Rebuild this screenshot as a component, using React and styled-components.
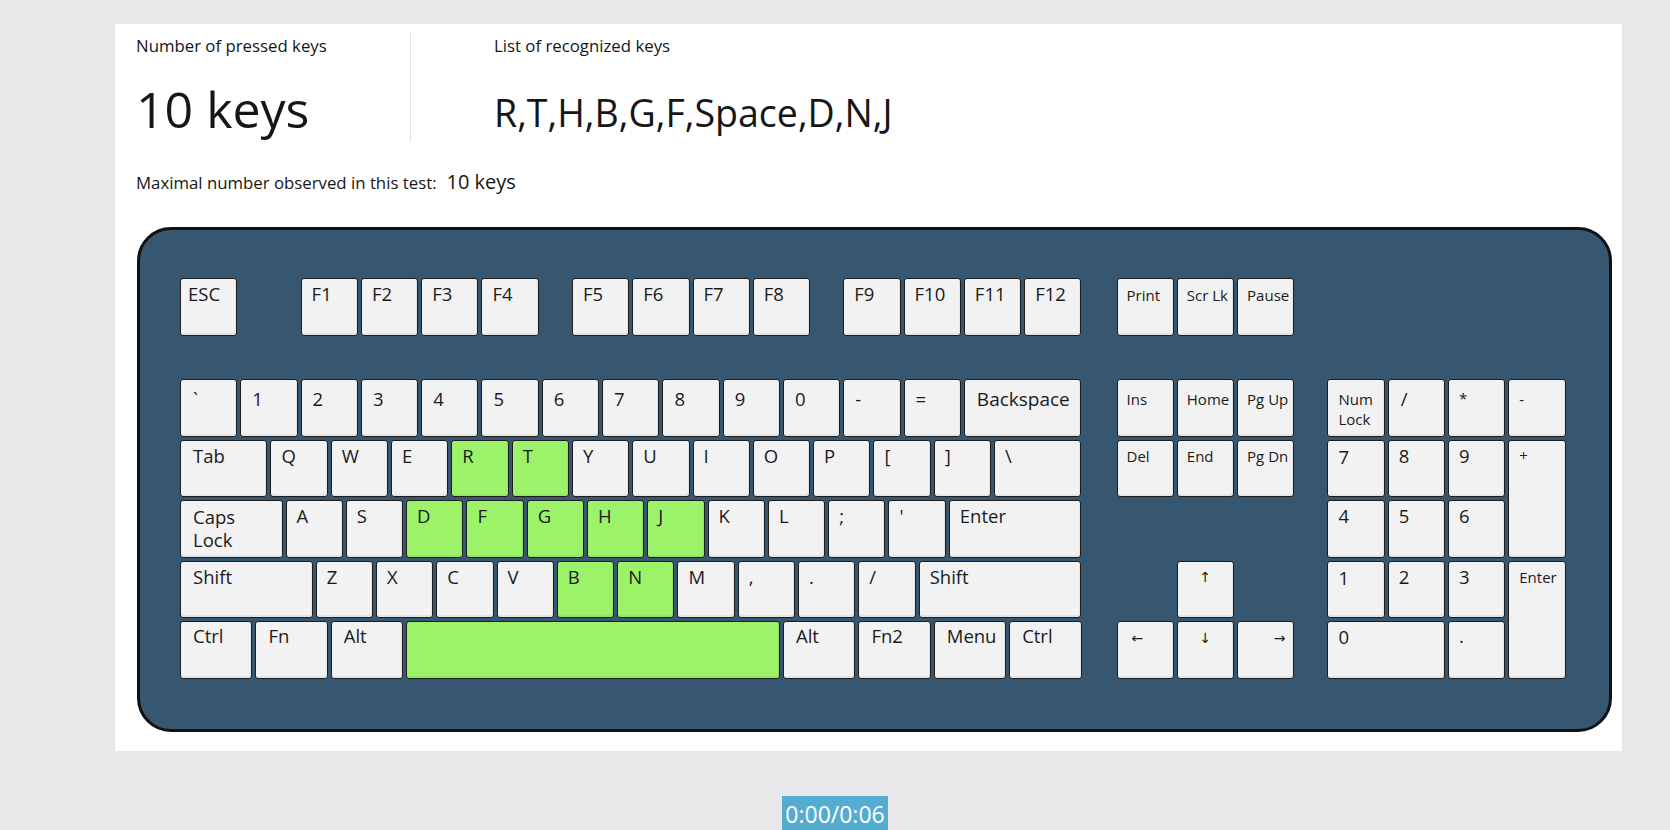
import React from "react";
import styled, { createGlobalStyle } from "styled-components";

const U = 60.3;
const GAP = 3;
const KH = 57.5;
const uw = (n) => n * U - GAP;

const GlobalStyle = createGlobalStyle`
  html, body { margin: 0; padding: 0; background: #e8e7e9; }
  body { font-family: "Open Sans", "Noto Sans", sans-serif; color: #161616; }
`;

const Page = styled.div`
  width: 1670px;
  height: 830px;
  overflow: hidden;
  padding-top: 24px;
  box-sizing: border-box;
  display: flex;
  flex-direction: column;
`;

const CardRow = styled.div`
  padding-left: 115px;
  display: flex;
`;

const Card = styled.section`
  width: 1507px;
  height: 727px;
  box-sizing: border-box;
  background: #ffffff;
  padding: 8px 0 0 21px;
  display: flex;
  flex-direction: column;
`;

const Header = styled.div`
  display: flex;
  height: 110px;
`;

const Stat = styled.div`
  display: flex;
  flex-direction: column;
  width: ${(p) => p.$w}px;
  padding-left: ${(p) => p.$pl || 0}px;
  border-left: ${(p) => (p.$divider ? "1px solid #e2e2e2" : "none")};
  box-sizing: border-box;
`;

const StatLabel = styled.div`
  margin-top: 4px;
  font-size: 16.8px;
  line-height: 20px;
  color: #161616;
`;

const StatValue = styled.div`
  margin-top: ${(p) => p.$mt}px;
  font-size: ${(p) => p.$fs}px;
  line-height: ${(p) => p.$lh}px;
  font-weight: 400;
  color: #161616;
  white-space: nowrap;
`;

const MaxRow = styled.div`
  margin-top: 28px;
  font-size: 16.8px;
  line-height: 24px;
  color: #161616;
`;

const MaxValue = styled.span`
  margin-left: 10px;
  font-size: 20px;
`;

const Keyboard = styled.div`
  margin-top: 32px;
  margin-left: 1px;
  width: 1475px;
  height: 505px;
  box-sizing: border-box;
  border: 3px solid #111;
  border-radius: 34px;
  background: #37566f;
  padding: 48px 0 0 40px;
  display: flex;
  flex-direction: column;
`;

const Tier = styled.div`
  display: flex;
  align-items: flex-start;
  margin-top: ${(p) => p.$mt || 0}px;
`;

const Group = styled.div`
  display: flex;
  gap: ${GAP}px;
  margin-left: ${(p) => p.$ml || 0}px;
  width: ${(p) => (p.$w ? `${p.$w}px` : "auto")};
`;

const Rows = styled.div`
  display: flex;
  flex-direction: column;
  gap: ${GAP}px;
  width: ${uw(15)}px;
`;

const Row = styled.div`
  display: flex;
  gap: ${GAP}px;
`;

const KeyGrid = styled.div`
  display: grid;
  grid-template-columns: repeat(${(p) => p.$cols}, ${U - GAP}px);
  grid-template-rows: repeat(5, ${KH}px);
  gap: ${GAP}px;
  margin-left: ${(p) => p.$ml}px;
`;

const Key = styled.div`
  flex: none;
  width: ${(p) => (p.$u ? `${uw(p.$u)}px` : "auto")};
  height: ${(p) => (p.$u ? `${KH}px` : "auto")};
  grid-column: ${(p) => p.$gc || "auto"};
  grid-row: ${(p) => p.$gr || "auto"};
  box-sizing: border-box;
  border: 1.5px solid #1d1d1d;
  border-radius: 3px;
  background: ${(p) => (p.$on ? "#9cf36a" : "#f2f2f2")};
  box-shadow: inset -1px -2px 0 rgba(0, 0, 0, 0.05);
  padding: ${(p) => p.$pt ?? 4}px ${(p) => p.$pr ?? 0}px 0 ${(p) => p.$pl ?? 10}px;
  font-family: "Open Sans", "DejaVu Sans", sans-serif;
  font-size: ${(p) => p.$fs || 18.5}px;
  line-height: ${(p) => p.$lh || 22}px;
  text-align: ${(p) => p.$align || "left"};
  color: #1a1a1a;
  white-space: pre-line;
  overflow: hidden;
`;

const Footer = styled.div`
  display: flex;
  justify-content: center;
  margin-top: 45px;
`;

const Timer = styled.div`
  background: #55acd1;
  color: #ffffff;
  font-family: "Open Sans", "Noto Sans", sans-serif;
  font-size: 23px;
  line-height: 36px;
  padding: 0 3px;
`;

const PRESSED = new Set(["R", "T", "H", "B", "G", "F", "Space", "D", "N", "J"]);

const k = (label, u = 1, extra = {}) => ({ label, u, ...extra });

const fnGroups = [
  { ml: 0, keys: [k("ESC", 1, { pl: 7 })] },
  { ml: U, keys: ["F1", "F2", "F3", "F4"].map((l) => k(l)) },
  { ml: U / 2, keys: ["F5", "F6", "F7", "F8"].map((l) => k(l)) },
  { ml: U / 2, keys: ["F9", "F10", "F11", "F12"].map((l) => k(l)) },
];

const navFn = ["Print", "Scr Lk", "Pause"].map((l) => k(l, 1, { fs: 15, pl: 9, pt: 5 }));

const mainRows = [
  {
    pt: 8,
    keys: [
      k("`", 1, { pl: 12 }),
      ...["1", "2", "3", "4", "5", "6", "7", "8", "9", "0", "-", "="].map((l) => k(l, 1, { pl: 11 })),
      k("Backspace", 2, { fs: 19, pl: 12 }),
    ],
  },
  {
    pt: 4,
    keys: [
      k("Tab", 1.5, { pl: 12 }),
      ..."QWERTYUIOP[]".split("").map((l) => k(l)),
      k("\\", 1.5),
    ],
  },
  {
    pt: 4,
    keys: [
      k("Caps\nLock", 1.75, { pl: 12, lh: 23 }),
      ..."ASDFGHJKL;'".split("").map((l) => k(l)),
      k("Enter", 2.25, { pl: 10 }),
    ],
  },
  {
    pt: 4,
    keys: [
      k("Shift", 2.25, { pl: 12 }),
      ..."ZXCVBNM,./".split("").map((l) => k(l)),
      k("Shift", 2.75, { pl: 10 }),
    ],
  },
  {
    pt: 3,
    keys: [
      k("Ctrl", 1.25, { pl: 12 }),
      k("Fn", 1.25, { pl: 12 }),
      k("Alt", 1.25, { pl: 12 }),
      k("", 6.25, { id: "Space" }),
      k("Alt", 1.25, { pl: 12 }),
      k("Fn2", 1.25, { pl: 12 }),
      k("Menu", 1.25, { pl: 12 }),
      k("Ctrl", 1.25, { pl: 12 }),
    ],
  },
];

const navKeys = [
  { label: "Ins", gc: 1, gr: 1, pt: 8 },
  { label: "Home", gc: 2, gr: 1, pt: 8 },
  { label: "Pg Up", gc: 3, gr: 1, pt: 8 },
  { label: "Del", gc: 1, gr: 2, pt: 4 },
  { label: "End", gc: 2, gr: 2, pt: 4 },
  { label: "Pg Dn", gc: 3, gr: 2, pt: 4 },
  { label: "↑", gc: 2, gr: 4, pt: 4, align: "center", pl: 0, fs: 14 },
  { label: "←", gc: 1, gr: 5, pt: 5, pl: 14, fs: 14 },
  { label: "↓", gc: 2, gr: 5, pt: 5, align: "center", pl: 0, fs: 14 },
  { label: "→", gc: 3, gr: 5, pt: 5, align: "right", pl: 0, pr: 8, fs: 14 },
];

const numKeys = [
  { label: "Num\nLock", gc: 1, gr: 1, pt: 10, fs: 15, lh: 19.5 },
  { label: "/", gc: 2, gr: 1, pt: 8, pl: 12 },
  { label: "*", gc: 3, gr: 1, pt: 7, fs: 15 },
  { label: "-", gc: 4, gr: 1, pt: 8, fs: 15 },
  { label: "7", gc: 1, gr: 2, pt: 5 },
  { label: "8", gc: 2, gr: 2, pt: 4 },
  { label: "9", gc: 3, gr: 2, pt: 4 },
  { label: "+", gc: 4, gr: "2 / span 2", pt: 3, fs: 15 },
  { label: "4", gc: 1, gr: 3, pt: 4 },
  { label: "5", gc: 2, gr: 3, pt: 4 },
  { label: "6", gc: 3, gr: 3, pt: 4 },
  { label: "1", gc: 1, gr: 4, pt: 5 },
  { label: "2", gc: 2, gr: 4, pt: 4 },
  { label: "3", gc: 3, gr: 4, pt: 4 },
  { label: "Enter", gc: 4, gr: "4 / span 2", pt: 4, fs: 15 },
  { label: "0", gc: "1 / span 2", gr: 5, pt: 4 },
  { label: ".", gc: 3, gr: 5, pt: 3 },
];

const renderKey = (key, i, rowPt) => (
  <Key
    key={i}
    $u={key.u}
    $gc={key.gc}
    $gr={key.gr}
    $on={PRESSED.has(key.id || key.label)}
    $pt={key.pt ?? rowPt}
    $pl={key.pl}
    $pr={key.pr}
    $fs={key.fs}
    $lh={key.lh}
    $align={key.align}
  >
    {key.label}
  </Key>
);

export default function App() {
  return (
    <>
      <GlobalStyle />
      <Page>
        <CardRow>
          <Card>
            <Header>
              <Stat $w={274}>
                <StatLabel>Number of pressed keys</StatLabel>
                <StatValue $mt={23} $fs={50} $lh={60}>
                  10 keys
                </StatValue>
              </Stat>
              <Stat $w={900} $pl={83} $divider>
                <StatLabel>List of recognized keys</StatLabel>
                <StatValue $mt={34} $fs={37.5} $lh={46}>
                  R,T,H,B,G,F,Space,D,N,J
                </StatValue>
              </Stat>
            </Header>
            <MaxRow>
              Maximal number observed in this test:
              <MaxValue>10 keys</MaxValue>
            </MaxRow>
            <Keyboard>
              <Tier>
                <Group $w={uw(15)}>
                  {fnGroups.map((g, gi) => (
                    <Group key={gi} $ml={g.ml}>
                      {g.keys.map((key, i) => renderKey(key, i, 4))}
                    </Group>
                  ))}
                </Group>
                <Group $ml={35}>{navFn.map((key, i) => renderKey(key, i, 5))}</Group>
              </Tier>
              <Tier $mt={43.5}>
                <Rows>
                  {mainRows.map((row, ri) => (
                    <Row key={ri}>{row.keys.map((key, i) => renderKey(key, i, row.pt))}</Row>
                  ))}
                </Rows>
                <KeyGrid $cols={3} $ml={35}>
                  {navKeys.map((key, i) => renderKey({ fs: 15, pl: 9, ...key }, i))}
                </KeyGrid>
                <KeyGrid $cols={4} $ml={33}>
                  {numKeys.map((key, i) => renderKey(key, i))}
                </KeyGrid>
              </Tier>
            </Keyboard>
          </Card>
        </CardRow>
        <Footer>
          <Timer>0:00/0:06</Timer>
        </Footer>
      </Page>
    </>
  );
}
